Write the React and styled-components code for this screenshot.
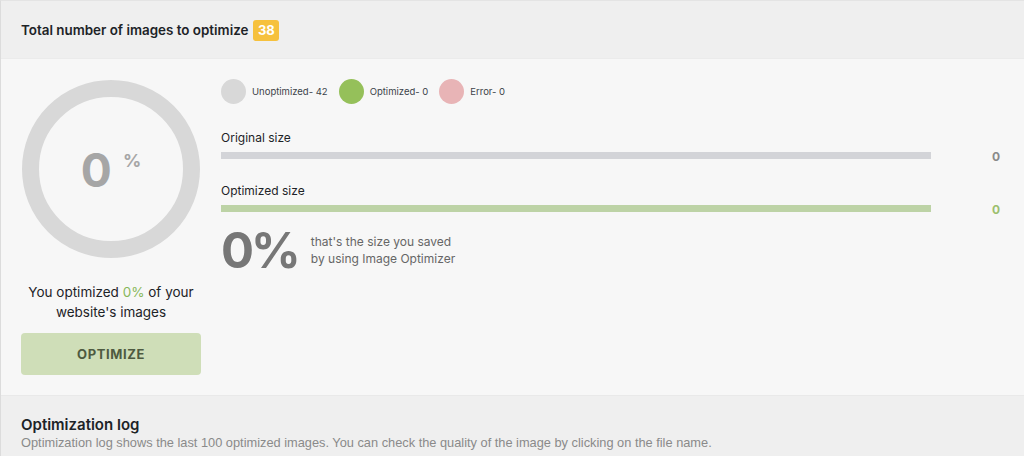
import React from "react";
import styled, { createGlobalStyle } from "styled-components";

const Global = createGlobalStyle`
  html, body { margin: 0; padding: 0; background: #f7f7f7; }
  body { font-family: Inter, "Noto Sans", sans-serif; color: #1d2327; }
  * { box-sizing: border-box; }
`;

const Page = styled.div`
  width: 1024px;
  height: 456px;
  overflow: hidden;
  border-left: 1px solid #dcdcdc;
  border-top: 1px solid #e4e4e4;
  display: flex;
  flex-direction: column;
`;

const Header = styled.div`
  height: 58px;
  flex: none;
  background: #efefef;
  border-bottom: 1px solid #ebebeb;
  display: flex;
  align-items: center;
  padding: 1px 20px 0;
  gap: 5px;
`;

const Title = styled.h2`
  margin: 0;
  font-size: 13.4px;
  font-weight: 600;
  color: #1d2327;
`;

const Badge = styled.span`
  display: inline-block;
  background: #f6c13d;
  color: #fff;
  font-weight: 700;
  font-size: 13px;
  border-radius: 3px;
  padding: 3px 4px;
  line-height: 15px;
  min-width: 26px;
  text-align: center;
`;

const Main = styled.div`
  height: 337px;
  flex: none;
  background: #f7f7f7;
  border-bottom: 1px solid #e9e9e9;
  display: flex;
  padding: 21px 20px 0 20px;
  gap: 20px;
`;

const LeftCol = styled.div`
  width: 180px;
  display: flex;
  flex-direction: column;
  align-items: center;
`;

const Ring = styled.div`
  width: 178px;
  height: 178px;
  border-radius: 50%;
  border: 17px solid #d8d8d8;
  display: flex;
  align-items: center;
  justify-content: center;
`;

const RingValue = styled.div`
  display: flex;
  align-items: flex-start;
  gap: 11px;
  margin-top: 2px;
  color: #a6a6a6;
  font-weight: 700;
`;

const BigZero = styled.span`
  font-size: 46px;
  line-height: 46px;
`;

const Pct = styled.span`
  font-size: 18px;
  line-height: 18px;
  margin-top: 5px;
`;

const Summary = styled.p`
  margin: 24px 0 0;
  text-align: center;
  font-size: 13.5px;
  line-height: 20px;
  color: #1d2327;
`;

const Green = styled.span`
  color: #88b85a;
`;

const OptimizeButton = styled.button`
  margin-top: 11px;
  width: 180px;
  height: 42px;
  border: none;
  border-radius: 4px;
  background: #cfdeb8;
  color: #4e5a40;
  font-family: Inter, sans-serif;
  font-weight: 700;
  font-size: 13px;
  letter-spacing: 0.6px;
`;

const RightCol = styled.div`
  flex: 1;
  display: flex;
  flex-direction: column;
`;

const Legend = styled.div`
  display: flex;
  align-items: center;
  margin-top: -1px;
`;

const LegendItem = styled.div`
  display: flex;
  align-items: center;
  gap: 6px;
  margin-right: 11px;
  font-size: 9.5px;
  color: #3c434a;
`;

const Dot = styled.span`
  width: 25px;
  height: 25px;
  border-radius: 50%;
  background: ${(p) => p.$color};
`;

const SizeLabel = styled.div`
  font-size: 12px;
  color: #1d2327;
  margin-top: ${(p) => p.$mt}px;
  line-height: 15px;
`;

const BarRow = styled.div`
  display: flex;
  align-items: center;
  margin-top: 3px;
  height: 15px;
`;

const Bar = styled.div`
  width: 710px;
  height: 7px;
  background: ${(p) => p.$color};
`;

const BarValue = styled.span`
  margin-left: auto;
  margin-right: 4px;
  margin-top: 2px;
  font-size: 12px;
  font-weight: 700;
  color: ${(p) => p.$color};
`;

const Saved = styled.div`
  display: flex;
  align-items: center;
  gap: 13px;
  margin-top: 10px;
`;

const SavedPct = styled.span`
  font-size: 49px;
  font-weight: 700;
  color: #777;
  line-height: 50px;
  letter-spacing: -3px;
`;

const SavedText = styled.span`
  font-size: 12px;
  color: #666;
  line-height: 17px;
  margin-top: -2px;
`;

const Log = styled.div`
  flex: 1;
  background: #efefef;
  padding: 20px 20px 0;
`;

const LogTitle = styled.h3`
  margin: 0;
  font-size: 15px;
  font-weight: 600;
  color: #1d2327;
  line-height: 18px;
`;

const LogDesc = styled.p`
  margin: 0;
  font-size: 12.8px;
  line-height: 17px;
  color: #8a8a8a;
  font-family: "Liberation Sans", sans-serif;
`;

export default function App() {
  return (
    <>
      <Global />
      <Page>
        <Header>
          <Title>Total number of images to optimize</Title>
          <Badge>38</Badge>
        </Header>
        <Main>
          <LeftCol>
            <Ring>
              <RingValue>
                <BigZero>0</BigZero>
                <Pct>%</Pct>
              </RingValue>
            </Ring>
            <Summary>
              You optimized <Green>0%</Green> of your
              <br />
              website's images
            </Summary>
            <OptimizeButton>OPTIMIZE</OptimizeButton>
          </LeftCol>
          <RightCol>
            <Legend>
              <LegendItem>
                <Dot $color="#d8d8d8" />
                Unoptimized- 42
              </LegendItem>
              <LegendItem>
                <Dot $color="#95c05a" />
                Optimized- 0
              </LegendItem>
              <LegendItem>
                <Dot $color="#e8b4b6" />
                Error- 0
              </LegendItem>
            </Legend>
            <SizeLabel $mt={26}>Original size</SizeLabel>
            <BarRow>
              <Bar $color="#d3d4d8" />
              <BarValue $color="#8a8a8a">0</BarValue>
            </BarRow>
            <SizeLabel $mt={20}>Optimized size</SizeLabel>
            <BarRow>
              <Bar $color="#bdd3a6" />
              <BarValue $color="#9dbf6f">0</BarValue>
            </BarRow>
            <Saved>
              <SavedPct>0%</SavedPct>
              <SavedText>
                that's the size you saved
                <br />
                by using Image Optimizer
              </SavedText>
            </Saved>
          </RightCol>
        </Main>
        <Log>
          <LogTitle>Optimization log</LogTitle>
          <LogDesc>
            Optimization log shows the last 100 optimized images. You can check the quality of the image by clicking on the file name.
          </LogDesc>
        </Log>
      </Page>
    </>
  );
}
